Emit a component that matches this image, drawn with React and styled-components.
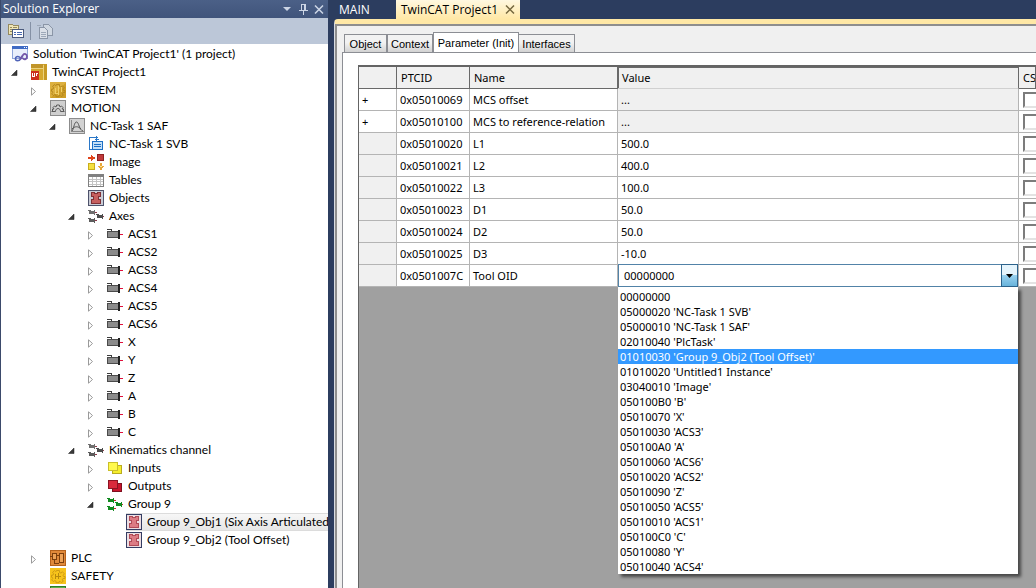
import React, { useState } from 'react';
import styled, { createGlobalStyle } from 'styled-components';

const GlobalStyle = createGlobalStyle`
* { box-sizing: border-box; }
body {
   margin: 0;
   overflow: hidden;
   background: #2c3d5f;
   font-family: "Open Sans", "Noto Sans", sans-serif;
   font-size: 12px;
   color: #000;
}
button, select, input { font-family: inherit; font-size: inherit; }
`;

const Shell = styled.div`
display: grid;
grid-template-columns: 328px minmax(0, 1fr);
gap: 6px;
height: 100vh;
overflow: hidden;
`;

/* ---------- solution explorer ---------- */

const Explorer = styled.aside`
display: flex;
flex-direction: column;
min-height: 0;
border-left: 1px solid #3b4a6b;
background: #fff;
`;

const ExplorerTitle = styled.header`
display: flex;
align-items: center;
height: 18px;
flex-shrink: 0;
padding: 0 1px 0 2px;
color: #fff;
background: linear-gradient(#4b6087, #40547b);
`;

const TitleText = styled.h1`
flex: 1;
margin: 0;
font-size: 12px;
font-weight: 400;
line-height: 18px;
`;

const TitleButton = styled.button`
display: flex;
justify-content: center;
align-items: center;
width: 16px;
height: 16px;
padding: 0;
border: 0;
color: #ccd5e5;
background: none;
`;

const Toolbar = styled.div`
display: flex;
align-items: center;
gap: 6px;
height: 26px;
flex-shrink: 0;
padding: 0 7px;
background: #bcc7d8;
`;

const ToolButton = styled.button`
display: flex;
padding: 0;
border: 0;
background: none;
opacity: ${p => (p.disabled ? 0.6 : 1)};
`;

const Divider = styled.span`
width: 1px;
height: 18px;
background: #8591a5;
`;

const Tree = styled.ul`
flex: 1;
min-height: 0;
margin: 0;
padding: 1px 0 0;
font-family: Lato, "Open Sans", sans-serif;
list-style: none;
overflow: hidden;
`;

const TreeRow = styled.li`
display: flex;
align-items: center;
height: 18px;
padding-left: ${p => p.$depth * 19 + (p.$twisty ? -9 : 11)}px;
white-space: nowrap;
`;

const Twisty = styled.button`
display: flex;
width: 20px;
height: 16px;
flex-shrink: 0;
align-items: center;
padding: 2px 0 0;
border: 0;
background: none;
`;

const NodeLabel = styled.span`
display: flex;
flex: ${p => (p.$selected ? 1 : 'none')};
align-items: center;
gap: 3px;
height: 18px;
background: ${p => (p.$selected ? 'linear-gradient(#f8f8f8, #e5e5e5)' : 'none')};
box-shadow: ${p => (p.$selected ? 'inset 0 0 0 1px #dcdcdc' : 'none')};

svg { flex-shrink: 0; }
span { padding-left: 2px; line-height: 18px; }
`;

/* ---------- editor ---------- */

const Editor = styled.main`
display: flex;
flex-direction: column;
min-width: 0;
min-height: 0;
`;

const DocTabs = styled.nav`
display: flex;
height: 19px;
flex-shrink: 0;
`;

const DocTab = styled.div`
display: flex;
align-items: center;
justify-content: space-between;
width: ${p => (p.$active ? 124 : 62)}px;
padding: 0 5px;
color: ${p => (p.$active ? '#000' : '#fff')};
background: ${p => (p.$active ? 'linear-gradient(#fff8e0, #ffe8a6)' : 'none')};
`;

const DocButton = styled.button`
padding: 0;
border: 0;
color: inherit;
background: none;
line-height: 18px;
`;

const DocBody = styled.div`
display: flex;
flex-direction: column;
flex: 1;
min-height: 0;
padding: 6px 0 0 7px;
border-top: 5px solid #ffe8a6;
border-left: 1px solid #d9dce2;
border-top-left-radius: 4px;
background: #f0f0f0;
box-shadow: inset 1px 1px 0 1px #8e8e8e;
`;

const PageTabs = styled.div`
display: flex;
align-items: flex-end;
height: 22px;
padding: 2px 0 0 2px;
flex-shrink: 0;
`;

const PageTab = styled.button`
width: ${p => p.$width}px;
height: ${p => (p.$active ? 21 : 18)}px;
margin-bottom: ${p => (p.$active ? -1 : 0)}px;
padding: 0;
border: 1px solid #8c8e94;
border-bottom: 0;
border-left-width: ${p => (p.$joined ? 0 : 1)}px;
background: ${p => (p.$active ? '#fff' : 'linear-gradient(#f2f2f2 45%, #d2d2d2)')};
font-family: "Liberation Sans", sans-serif;
font-size: 11px;
line-height: ${p => (p.$active ? 17 : 18)}px;
white-space: nowrap;
`;

const Page = styled.div`
display: flex;
flex: 1;
min-height: 0;
padding: 12px 0 0 15px;
border: solid #8c8e94;
border-width: 1px 0 0 1px;
background: #fff;
`;

const GridArea = styled.div`
flex: 1;
min-width: 0;
border: solid #646464;
border-width: 2px 0 0 1px;
background: #a0a0a0;
`;

const Table = styled.table`
width: 100%;
table-layout: fixed;
border-collapse: separate;
border-spacing: 0;
font-family: "Noto Sans", "Open Sans", sans-serif;
font-size: 11px;
`;

const Th = styled.th`
height: 22px;
padding: 0 4px;
overflow: hidden;
border: solid #696969;
border-width: 0 1px 1px 0;
border-bottom-color: ${p => (p.$active ? '#d0d0d0' : '#696969')};
background: #f0f0f0;
box-shadow: ${p => (p.$active ? 'inset 1px 1px 0 #696969' : 'none')};
font-weight: 400;
text-align: left;
white-space: nowrap;
`;

const Td = styled.td`
position: relative;
height: 22px;
padding: 0 3px;
border: solid #b4b4b4;
border-width: 0 1px 1px 0;
background: ${p => (p.$shaded ? '#f0f0f0' : '#fff')};
white-space: nowrap;
`;

const ExpandButton = styled.button`
display: block;
padding: 0;
border: 0;
background: none;
line-height: 16px;
`;

const CheckCell = styled(Td)`
padding: 0 0 0 4px;
border-right: 0;
overflow: hidden;
`;

const CheckBox = styled.input`
appearance: none;
display: block;
width: 16px;
height: 16px;
margin: 0;
border: 2px solid;
border-color: #7c7c7c #e3e3e3 #e3e3e3 #7c7c7c;
background: #fff;
`;

const Combo = styled.div`
position: absolute;
inset: -1px 0 -1px 0;
z-index: 2;
`;

const ComboSelect = styled.select`
appearance: none;
display: block;
width: 100%;
height: 100%;
padding: 0 20px 0 5px;
border: 1px solid #5283a8;
border-radius: 0;
outline: 0;
color: #000;
background: #fff;
`;

const ComboArrow = styled.span`
position: absolute;
top: 0;
right: 0;
bottom: 0;
display: flex;
justify-content: center;
align-items: center;
width: 17px;
border: 1px solid #2c628b;
background: linear-gradient(#e5f4fc 45%, #98d1ef 50%, #68b3db);
pointer-events: none;
`;

const DropList = styled.ul`
position: absolute;
top: 100%;
left: 0;
right: 0;
margin: 0;
padding: 2px 0 0;
list-style: none;
background: #fff;
box-shadow: 3px 3px 3px rgba(0, 0, 0, 0.55);
`;

const DropItem = styled.li`
height: 15px;
padding-left: 2px;
color: ${p => (p.$active ? '#fff' : '#000')};
background: ${p => (p.$active ? '#3399ff' : '#fff')};
line-height: 15px;
`;

/* ---------- icons ---------- */

const Icon = ({ children }) => (
   <svg width="16" height="16" viewBox="0 0 16 16" fill="none" shapeRendering="crispEdges" aria-hidden="true">
      {children}
   </svg>
);

const GEAR = 'M6.5 2.5h3v2l1.5.6 1.4-1.3 2 2-1.3 1.5.5 1.2h1.4v2h-2l-.7 1.3 1 1.4-2 1.4-1.3-1.3-1 .4v1h-3v-1.5l-1.3-.6-1.4 1-1.6-1.7 1-1.4-.5-1.3H1.5v-2H3l.6-1.4-1-1.5 1.8-1.7 1.4 1 .7-.5z';

const AxisShape = ({ x, y, body, tip }) => (
   <g transform={`translate(${x} ${y})`}>
      <path d="M0 1h3v1H0z" fill={body} />
      <path d="M1 2h5v3H1zM6 1h1v5H6z" fill={body} />
      <path d="M7 3h2v1H7z" fill={tip} />
   </g>
);

const ICONS = {
   solution: (
      <Icon>
         <rect x="0.500" y="0.500" width="15" height="12" fill="#e9effb" stroke="#8fa6da" />
         <path d="M0 0h16v3H0z" fill="#3f6bc4" />
         <path d="M12 1.500h3" stroke="#fff" strokeDasharray="1 1" />
         <path d="M9 12.500C7.500 10 4 9.500 3.500 12.500S7.500 15.500 9 12.500l1.500-2.500" stroke="#4f63b8" strokeWidth="1.600" shapeRendering="auto" />
         <path d="M8 13.500l3-4.500c1.500-2 4-1 4 1.500s-2.500 4-4.500 1.500" stroke="#7457a8" strokeWidth="1.800" shapeRendering="auto" />
      </Icon>
   ),
   project: (
      <Icon>
         <rect width="16" height="16" fill="#d5a82f" />
         <path d="M0 0h12v4H0z" fill="#c1952a" />
         <path d="M0 4.500h12M12.500 1v15" stroke="#ecd27c" />
         <path d="M13 0h3v16h-3z" fill="#c79a25" />
         <rect y="7" width="8" height="9" fill="#cc2f1c" />
         <path d="M1.500 9v3h2V9M5 9.500h2M5.500 9v3" stroke="#fff" />
      </Icon>
   ),
   system: (
      <Icon>
         <rect width="16" height="16" fill="#cf9f28" />
         <path d="M0 0h16L0 16z" fill="#dcb03f" />
         <path d={GEAR} stroke="#b5881f" shapeRendering="auto" />
         <path d="M8 4v9M5 6v5l3 1M11 5v5" stroke="#f0cf68" />
      </Icon>
   ),
   motion: (
      <Icon>
         <rect x="0.500" y="0.500" width="15" height="15" fill="#cfcfcf" stroke="#8c8c8c" />
         <path d="M1.500 11.500h4c0-4 5-4 5 0h4M2.500 11V9h1.500l-1-1.500L4.500 6l1.500 1 .7-2h2.600l.7 2 1.500-1L13 7.500 12 9h1.500v2" stroke="#5a5a5a" shapeRendering="auto" />
      </Icon>
   ),
   task: (
      <Icon>
         <rect x="0.500" y="0.500" width="15" height="15" fill="#d2d2d2" stroke="#8c8c8c" />
         <path d="M2.500 2v11.500H15" stroke="#8a8a8a" />
         <path d="M3 13C5 11 5 4 7.500 4S10 12 14 13M3 11c3-3 6-3 9 0" stroke="#555" shapeRendering="auto" />
      </Icon>
   ),
   svb: (
      <Icon>
         <path d="M10 1.500H1.500v12H5M8.500 0v5M6.500 3.500h4" stroke="#2b78c8" />
         <rect x="4.500" y="5.500" width="10" height="8" fill="#c4e0f8" stroke="#1d6fc4" />
         <path d="M6 8.500h7M6 10.500h7" stroke="#1d6fc4" />
      </Icon>
   ),
   image: (
      <Icon>
         <path d="M3 1h1v1h1v1h2v2H5v1H4v1H3V5H0V3h3z" fill="#e0451c" />
         <rect x="9.500" y="0.500" width="6" height="6" fill="#c0393a" stroke="#8e2222" />
         <rect x="0.500" y="9.500" width="6" height="6" fill="#f5e042" stroke="#c9ae1c" />
         <path d="M12 9h2v3h2v1h-1v1h-1v2h-2v-2h-1v-1h-1v-1h2z" fill="#e8a73a" />
         <path d="M12 12h2v1h-2z" fill="#fbe59a" />
      </Icon>
   ),
   tables: (
      <Icon>
         <rect x="0.500" y="2.500" width="15" height="12" fill="#fff" stroke="#808080" />
         <path d="M0 2h16v3H0z" fill="#808080" />
         <path d="M1 7.500h14M1 9.500h14M1 12.500h14M4.500 5v9M8.500 5v9M12.500 5v9" stroke="#c3c3c3" />
      </Icon>
   ),
   object: (
      <Icon>
         <rect x="0.500" y="0.500" width="15" height="15" fill="#ecdde1" stroke="#343d63" />
         <path d="M3.500 2.500h3v1h3v-1h3v4h-2v3h2v4h-9v-4h2v-3h-2z" fill="#dc7c84" stroke="#b04b57" />
      </Icon>
   ),
   objects: (
      <Icon>
         <rect x="0.500" y="0.500" width="15" height="15" fill="#c9ccd6" stroke="#4d526b" />
         <path d="M3.500 2.500h3v1h3v-1h3v4h-2v3h2v4h-9v-4h2v-3h-2z" fill="#c65f5f" stroke="#7f3035" />
      </Icon>
   ),
   axes: (
      <Icon>
         <AxisShape x="0" y="1" body="#6f6f6f" tip="#8d3b4a" />
         <AxisShape x="8" y="5" body="#4c4c4c" tip="#8d3b4a" />
         <AxisShape x="0" y="9" body="#5c5c5c" tip="#8d3b4a" />
      </Icon>
   ),
   group: (
      <Icon>
         <AxisShape x="0" y="1" body="#128a20" tip="#c22a2a" />
         <AxisShape x="8" y="5" body="#128a20" tip="#c22a2a" />
         <AxisShape x="0" y="9" body="#128a20" tip="#c22a2a" />
      </Icon>
   ),
   axis: (
      <Icon>
         <path d="M0 3h5v3H4V4H0z" fill="#3c3c3c" />
         <rect x="0.500" y="5.500" width="11" height="6" fill="#8b8b8b" stroke="#4b4b4b" />
         <path d="M11 4h2v9h-2z" fill="#222" />
         <path d="M13 8h3v1h-3z" fill="#e0103c" />
      </Icon>
   ),
   inputs: (
      <Icon>
         <rect x="5.500" y="5.500" width="9" height="8" fill="#f5ee2c" stroke="#b9ac20" />
         <rect x="1.500" y="2.500" width="9" height="8" fill="#fff94c" stroke="#cabf28" />
      </Icon>
   ),
   outputs: (
      <Icon>
         <rect x="5.500" y="5.500" width="9" height="8" fill="#c8142c" stroke="#7d1020" />
         <rect x="1.500" y="2.500" width="9" height="8" fill="#d92a3c" stroke="#8b1422" />
      </Icon>
   ),
   plc: (
      <Icon>
         <rect x="0.500" y="0.500" width="15" height="15" fill="#e0893a" stroke="#b5621c" />
         <path d="M2.500 3.500h4v6h-4zM9.500 3.500h4v9h-4zM0 6.500h2M7 5.500h2M4.500 10v3H9" stroke="#7c3f0d" />
         <path d="M3 4h3v5H3zM10 4h3v8h-3z" fill="#eda257" />
      </Icon>
   ),
   safety: (
      <Icon>
         <rect width="16" height="16" fill="#f7c31b" />
         <path d={GEAR} stroke="#cf9c14" shapeRendering="auto" />
         <path d="M5 8.500h6M8.500 5v6M5.500 6v5" stroke="#b98a0c" />
      </Icon>
   ),
   cpp: (
      <Icon>
         <rect x="0.500" y="0.500" width="15" height="15" fill="#5fb04a" stroke="#2d7d27" />
      </Icon>
   )
};

const OpenArrow = () => (
   <svg width="8" height="8" viewBox="0 0 8 8" aria-hidden="true">
      <path d="M6 1v5.500H.5z" fill="#3a3a3a" stroke="#1c1c1c" strokeWidth="0.500" />
   </svg>
);

const ClosedArrow = () => (
   <svg width="8" height="9" viewBox="0 0 8 9" aria-hidden="true">
      <path d="M1.500 .8v7.400L5.500 4.500z" fill="#fff" stroke="#9a9a9a" />
   </svg>
);

/* ---------- data ---------- */

const axisNames = ['ACS1', 'ACS2', 'ACS3', 'ACS4', 'ACS5', 'ACS6', 'X', 'Y', 'Z', 'A', 'B', 'C'];

const nodes = [
   { depth: 0, icon: 'solution', label: "Solution 'TwinCAT Project1' (1 project)" },
   { depth: 1, icon: 'project', label: 'TwinCAT Project1', state: 'open' },
   { depth: 2, icon: 'system', label: 'SYSTEM', state: 'closed' },
   { depth: 2, icon: 'motion', label: 'MOTION', state: 'open' },
   { depth: 3, icon: 'task', label: 'NC-Task 1 SAF', state: 'open' },
   { depth: 4, icon: 'svb', label: 'NC-Task 1 SVB' },
   { depth: 4, icon: 'image', label: 'Image' },
   { depth: 4, icon: 'tables', label: 'Tables' },
   { depth: 4, icon: 'objects', label: 'Objects' },
   { depth: 4, icon: 'axes', label: 'Axes', state: 'open' },
   ...axisNames.map(label => ({ depth: 5, icon: 'axis', label, state: 'closed' })),
   { depth: 4, icon: 'axes', label: 'Kinematics channel', state: 'open' },
   { depth: 5, icon: 'inputs', label: 'Inputs', state: 'closed' },
   { depth: 5, icon: 'outputs', label: 'Outputs', state: 'closed' },
   { depth: 5, icon: 'group', label: 'Group 9', state: 'open' },
   { depth: 6, icon: 'object', label: 'Group 9_Obj1 (Six Axis Articulated)', selected: true },
   { depth: 6, icon: 'object', label: 'Group 9_Obj2 (Tool Offset)' },
   { depth: 2, icon: 'plc', label: 'PLC', state: 'closed' },
   { depth: 2, icon: 'safety', label: 'SAFETY' },
   { depth: 2, icon: 'cpp' }
];

const pageTabs = [
   { label: 'Object', width: 43 },
   { label: 'Context', width: 46 },
   { label: 'Parameter (Init)', width: 86 },
   { label: 'Interfaces', width: 56, joined: true }
];

const parameters = [
   { id: '0x05010069', name: 'MCS offset', value: '...', group: true },
   { id: '0x05010100', name: 'MCS to reference-relation', value: '...', group: true },
   { id: '0x05010020', name: 'L1', value: '500.0' },
   { id: '0x05010021', name: 'L2', value: '400.0' },
   { id: '0x05010022', name: 'L3', value: '100.0' },
   { id: '0x05010023', name: 'D1', value: '50.0' },
   { id: '0x05010024', name: 'D2', value: '50.0' },
   { id: '0x05010025', name: 'D3', value: '-10.0' },
   { id: '0x0501007C', name: 'Tool OID', combo: true }
];

const toolOptions = [
   '00000000',
   "05000020 'NC-Task 1 SVB'",
   "05000010 'NC-Task 1 SAF'",
   "02010040 'PlcTask'",
   "01010030 'Group 9_Obj2 (Tool Offset)'",
   "01010020 'Untitled1 Instance'",
   "03040010 'Image'",
   "050100B0 'B'",
   "05010070 'X'",
   "05010030 'ACS3'",
   "050100A0 'A'",
   "05010060 'ACS6'",
   "05010020 'ACS2'",
   "05010090 'Z'",
   "05010050 'ACS5'",
   "05010010 'ACS1'",
   "050100C0 'C'",
   "05010080 'Y'",
   "05010040 'ACS4'"
];

function SolutionExplorer() {
   return (
      <Explorer>
         <ExplorerTitle>
            <TitleText>Solution Explorer</TitleText>
            <TitleButton aria-label="Window position">
               <svg width="8" height="4"><path d="M0 0h8L4 4z" fill="currentColor" /></svg>
            </TitleButton>
            <TitleButton aria-label="Auto hide">
               <svg width="9" height="11" fill="none" stroke="currentColor" shapeRendering="crispEdges">
                  <path d="M2.500 6V.5h4V6M5.500 1v5M0 6.500h9M4.500 7v4" />
               </svg>
            </TitleButton>
            <TitleButton aria-label="Close">
               <svg width="10" height="9" stroke="currentColor" strokeWidth="1.500"><path d="M1 0.500l8 8M9 .5l-8 8" /></svg>
            </TitleButton>
         </ExplorerTitle>
         <Toolbar>
            <ToolButton aria-label="Properties">
               <Icon>
                  <path d="M.5 1.500h4l1 1h5v9H.5z" fill="#f0e6b6" stroke="#958a5f" />
                  <path d="M2 4.500h2M5 4.500h4M2 6.500h2M2 8.500h2" stroke="#958a5f" />
                  <rect x="4.500" y="6.500" width="11" height="8" fill="#fff" stroke="#4b5a7c" />
                  <path d="M6 9.500h2M9 9.500h5M6 11.500h2M9 11.500h5" stroke="#4668b0" />
               </Icon>
            </ToolButton>
            <Divider />
            <ToolButton aria-label="Show all files" disabled>
               <Icon>
                  <path d="M6.500 1.500h5l4 4v7h-9z" fill="#dde2e8" stroke="#6b7787" />
                  <path d="M2.500 4.500h5l3 3v8h-8z" fill="#f0f2f4" stroke="#6b7787" />
                  <path d="M4 9.500h5M4 11.500h5M4 13.500h5M0 2.500h4" stroke="#8a95a3" />
               </Icon>
            </ToolButton>
         </Toolbar>
         <Tree role="tree">
            {nodes.map((node, i) => (
               <TreeRow key={i} role="treeitem" $depth={node.depth} $twisty={Boolean(node.state)}>
                  {node.state && (
                     <Twisty aria-label={`Toggle ${node.label}`}>
                        {node.state === 'open' ? <OpenArrow /> : <ClosedArrow />}
                     </Twisty>
                  )}
                  <NodeLabel $selected={node.selected}>
                     {ICONS[node.icon]}
                     {node.label && <span>{node.label}</span>}
                  </NodeLabel>
               </TreeRow>
            ))}
         </Tree>
      </Explorer>
   );
}

function ToolCombo() {
   const [value, setValue] = useState(toolOptions[0]);

   return (
      <Combo>
         <ComboSelect aria-label="Tool OID" value={value} onChange={e => setValue(e.target.value)}>
            {toolOptions.map(option => <option key={option}>{option}</option>)}
         </ComboSelect>
         <ComboArrow>
            <svg width="7" height="4"><path d="M0 0h7L3.500 4z" fill="#000" /></svg>
         </ComboArrow>
         <DropList role="listbox" aria-label="Tool OID options">
            {toolOptions.map((option, i) => (
               <DropItem key={option} role="option" $active={i === 4} onClick={() => setValue(option)}>
                  {option}
               </DropItem>
            ))}
         </DropList>
      </Combo>
   );
}

function ParameterTable() {
   return (
      <Table>
         <colgroup>
            <col width="38" />
            <col width="73" />
            <col width="148" />
            <col />
            <col width="17" />
         </colgroup>
         <thead>
            <tr>
               <Th aria-label="Expand" />
               <Th>PTCID</Th>
               <Th>Name</Th>
               <Th $active>Value</Th>
               <Th>CS</Th>
            </tr>
         </thead>
         <tbody>
            {parameters.map(row => (
               <tr key={row.id}>
                  <Td $shaded={!row.group}>
                     {row.group && <ExpandButton aria-label={`Expand ${row.name}`}>+</ExpandButton>}
                  </Td>
                  <Td>{row.id}</Td>
                  <Td>{row.name}</Td>
                  <Td $shaded={row.group}>{row.combo ? <ToolCombo /> : row.value}</Td>
                  <CheckCell>
                     <CheckBox type="checkbox" aria-label={`CS ${row.name}`} />
                  </CheckCell>
               </tr>
            ))}
         </tbody>
      </Table>
   );
}

export default function App() {
   const [tab, setTab] = useState('Parameter (Init)');

   return (
      <Shell>
         <GlobalStyle />
         <SolutionExplorer />
         <Editor>
            <DocTabs>
               <DocTab>
                  <DocButton>MAIN</DocButton>
               </DocTab>
               <DocTab $active>
                  <DocButton>TwinCAT Project1</DocButton>
                  <DocButton aria-label="Close document">
                     <svg width="10" height="9" stroke="#75683f" strokeWidth="1.500"><path d="M1 .5l8 8M9 .5l-8 8" /></svg>
                  </DocButton>
               </DocTab>
            </DocTabs>
            <DocBody>
               <PageTabs role="tablist">
                  {pageTabs.map(t => (
                     <PageTab
                        key={t.label}
                        role="tab"
                        $width={t.width}
                        $joined={t.joined}
                        $active={tab === t.label}
                        onClick={() => setTab(t.label)}
                     >
                        {t.label}
                     </PageTab>
                  ))}
               </PageTabs>
               <Page>
                  <GridArea>
                     <ParameterTable />
                  </GridArea>
               </Page>
            </DocBody>
         </Editor>
      </Shell>
   );
}
